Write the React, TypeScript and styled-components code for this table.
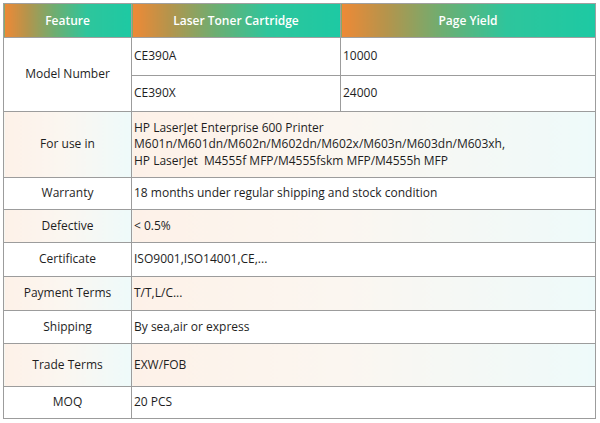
import React from "react";
import styled, { createGlobalStyle } from "styled-components";

const Global = createGlobalStyle`
  html, body { margin: 0; padding: 0; background: #ffffff; }
  body { font-family: "Open Sans", "Noto Sans", sans-serif; }
`;

const Page = styled.div`
  padding: 3px 0 0 3px;
  width: 600px;
  height: 423px;
  box-sizing: border-box;
`;

const Table = styled.table`
  border-collapse: collapse;
  table-layout: fixed;
  width: 593px;
  border: 1px solid #a8a8a8;
  font-size: 12px;
  color: #1e1e1e;
`;

const HeadCell = styled.th`
  height: 33px;
  padding: 0;
  border: 1px solid #a0a0a0;
  color: #ffffff;
  font-weight: 600;
  font-size: 12px;
  text-align: center;
  background: linear-gradient(
    to right,
    #ee8936 0%,
    #b4944c 18%,
    #6cae72 40%,
    #2ec59c 65%,
    #1dc9a3 100%
  );
`;

const Row = styled.tr<{ $h: number }>`
  height: ${(p) => p.$h}px;
`;

const Cell = styled.td<{ $shade?: boolean; $center?: boolean }>`
  padding: 0 2px;
  border: 1px solid #9c9c9c;
  line-height: 16.5px;
  vertical-align: middle;
  text-align: ${(p) => (p.$center ? "center" : "left")};
  background: ${(p) =>
    p.$shade
      ? "linear-gradient(to right, #fdf1e8 0%, #fbf6f0 45%, #eefafa 100%)"
      : "#ffffff"};
`;

type Item = { label: string; value: React.ReactNode; h: number };

const rows: Item[] = [
  {
    label: "For use in",
    h: 66,
    value: (
      <>
        HP LaserJet Enterprise 600 Printer
        <br />
        M601n/M601dn/M602n/M602dn/M602x/M603n/M603dn/M603xh,
        <br />
        HP LaserJet&nbsp; M4555f MFP/M4555fskm MFP/M4555h MFP
      </>
    ),
  },
  { label: "Warranty", h: 32, value: "18 months under regular shipping and stock condition" },
  { label: "Defective", h: 33, value: "< 0.5%" },
  { label: "Certificate", h: 34, value: "ISO9001,ISO14001,CE,..." },
  { label: "Payment Terms", h: 34, value: "T/T,L/C..." },
  { label: "Shipping", h: 33, value: "By sea,air or express" },
  { label: "Trade Terms", h: 43, value: "EXW/FOB" },
  { label: "MOQ", h: 32, value: "20 PCS" },
];

export default function App() {
  return (
    <Page>
      <Global />
      <Table>
        <colgroup>
          <col style={{ width: 128 }} />
          <col style={{ width: 209 }} />
          <col />
        </colgroup>
        <thead>
          <tr>
            <HeadCell>Feature</HeadCell>
            <HeadCell>Laser Toner Cartridge</HeadCell>
            <HeadCell>Page Yield</HeadCell>
          </tr>
        </thead>
        <tbody>
          <Row $h={38}>
            <Cell $center rowSpan={2}>
              Model Number
            </Cell>
            <Cell>CE390A</Cell>
            <Cell>10000</Cell>
          </Row>
          <Row $h={36}>
            <Cell>CE390X</Cell>
            <Cell>24000</Cell>
          </Row>
          {rows.map((r, i) => (
            <Row key={r.label} $h={r.h}>
              <Cell $center $shade={i % 2 === 0}>
                {r.label}
              </Cell>
              <Cell $shade={i % 2 === 0} colSpan={2}>
                {r.value}
              </Cell>
            </Row>
          ))}
        </tbody>
      </Table>
    </Page>
  );
}
